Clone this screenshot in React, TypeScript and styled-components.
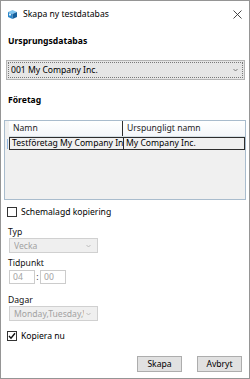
import React from "react";
import styled, { createGlobalStyle } from "styled-components";

const GlobalStyle = createGlobalStyle`
    html, body {
        margin: 0;
        padding: 0;
        background: #ffffff;
    }
    body {
        font-family: "Noto Sans", "Segoe UI", sans-serif;
        font-size: 8.6px;
        color: #000000;
    }
`;

const Window = styled.div`
    width: 250px;
    height: 379px;
    box-sizing: border-box;
    border: 1px solid #959595;
    background: #ffffff;
    display: flex;
    flex-direction: column;
    overflow: hidden;
`;

const TitleBar = styled.div`
    height: 26px;
    display: flex;
    align-items: center;
    padding: 0 7px 0 6px;
    gap: 5px;
`;

const Title = styled.span`
    flex: 1;
    font-size: 8.6px;
    color: #000;
`;

const Body = styled.div`
    display: flex;
    flex-direction: column;
    padding: 0 3px;
`;

interface SpaceProps {
    top?: number;
}

const SectionLabel = styled.div<SpaceProps>`
    font-weight: bold;
    height: 12px;
    line-height: 12px;
    margin: ${p => p.top || 0}px 0 0 4px;
`;

const FieldLabel = styled.div<SpaceProps>`
    height: 12px;
    line-height: 12px;
    margin: ${p => p.top || 0}px 0 0 4px;
    color: #111;
`;

const MainCombo = styled.div`
    margin: 13px 1px 0 2px;
    height: 20px;
    box-sizing: border-box;
    border: 1px solid #b4b4b4;
    background: #e6e6e6;
    padding: 1px;
    display: flex;
`;

const FocusBox = styled.div`
    flex: 1;
    border: 1px dotted #7a7a7a;
    display: flex;
    align-items: center;
    justify-content: space-between;
    padding: 0 4px 0 2px;
`;

const ComboText = styled.span`
    flex: 1;
    white-space: nowrap;
    overflow: hidden;
`;

const Grid = styled.div`
    margin: 14px 0 0 0;
    height: 80px;
    box-sizing: border-box;
    border: 1px solid #a9bccd;
    background: #f0f0f0;
    display: flex;
    flex-direction: column;
    padding-left: 4px;
`;

const GridRow = styled.div<{ $header?: boolean }>`
    display: grid;
    grid-template-columns: 113px 1fr;
    height: ${p => (p.$header ? 16 : 13)}px;
    box-sizing: border-box;
    background: ${p => (p.$header ? "linear-gradient(#ffffff, #f4f7fa)" : "#f0f0f0")};
    border: ${p => (p.$header ? "none" : "1px solid #2e2e2e")};
    border-bottom: 1px solid ${p => (p.$header ? "#d5dfe5" : "#2e2e2e")};
    position: relative;
`;

const Cell = styled.div<{ $header?: boolean }>`
    padding-left: ${p => (p.$header ? 4 : 2)}px;
    line-height: ${p => (p.$header ? 15 : 11)}px;
    white-space: nowrap;
    overflow: hidden;
    color: ${p => (p.$header ? "#1e1e1e" : "#000")};
    & + & {
        border-left: 1px solid ${p => (p.$header ? "#d5dfe5" : "#2e2e2e")};
    }
`;

const RowMarker = styled.span`
    position: absolute;
    left: -3px;
    top: 1px;
    width: 1px;
    height: 10px;
    background: #8fb5e0;
`;

const CheckRow = styled.label<SpaceProps>`
    display: flex;
    align-items: center;
    gap: 4px;
    height: 14px;
    margin: ${p => p.top || 0}px 0 0 3px;
`;

const Box = styled.span`
    width: 8px;
    height: 8px;
    border: 1px solid #333;
    background: #fff;
    display: flex;
    align-items: center;
    justify-content: center;
`;

const SmallCombo = styled.div<SpaceProps>`
    width: 89px;
    height: 15px;
    box-sizing: border-box;
    margin: ${p => p.top || 0}px 0 0 5px;
    border: 1px solid #d0d0d0;
    background: #efefef;
    color: #a2a2a2;
    display: flex;
    align-items: center;
    gap: 2px;
    padding: 0 6px 0 4px;
`;

const TimeRow = styled.div`
    display: flex;
    align-items: center;
    margin: 1px 0 0 5px;
`;

const TimeInput = styled.div`
    width: 26px;
    height: 14px;
    box-sizing: border-box;
    border: 1px solid #cccccc;
    color: #a2a2a2;
    line-height: 12px;
    padding-left: 3px;
    background: #fff;
`;

const Colon = styled.span`
    color: #333;
    width: 5px;
    text-align: center;
`;

const Footer = styled.div`
    display: flex;
    justify-content: flex-end;
    gap: 15px;
    margin: 13px 4px 0 0;
`;

const Button = styled.button`
    width: 45px;
    height: 16px;
    box-sizing: border-box;
    border: 1px solid #adadad;
    background: #e1e1e1;
    font-family: inherit;
    font-size: 8.6px;
    padding: 0;
    line-height: 13px;
    color: #000;
`;

const Chevron = ({ color }: { color: string }) => (
    <svg width="5" height="4" viewBox="0 0 5 4">
        <path d="M0.5 1 L2.5 3 L4.5 1" stroke={color} strokeWidth="0.9" fill="none" />
    </svg>
);

const AppIcon = () => (
    <svg width="11" height="11" viewBox="0 0 11 11">
        <polygon points="1,3 5.5,1 10,3 5.5,5" fill="#7ec4ee" />
        <polygon points="1,3 5.5,5 5.5,10 1,8" fill="#2a86c9" />
        <polygon points="5.5,5 10,3 10,8 5.5,10" fill="#155f9c" />
        <rect x="2" y="4.5" width="2" height="2" fill="#dff1fb" />
    </svg>
);

const CloseIcon = () => (
    <svg width="9" height="9" viewBox="0 0 9 9">
        <path d="M0.5 0.5 L8.5 8.5 M8.5 0.5 L0.5 8.5" stroke="#333" strokeWidth="0.9" />
    </svg>
);

const Check = () => (
    <svg width="8" height="8" viewBox="0 0 8 8">
        <path d="M1 4 L3 6.2 L7 1.2" stroke="#111" strokeWidth="1.4" fill="none" />
    </svg>
);

const App = () => {
    return (
        <>
            <GlobalStyle />
            <Window>
                <TitleBar>
                    <AppIcon />
                    <Title>Skapa ny testdatabas</Title>
                    <CloseIcon />
                </TitleBar>
                <Body>
                    <SectionLabel top={8}>Ursprungsdatabas</SectionLabel>
                    <MainCombo>
                        <FocusBox>
                            <ComboText>001 My Company Inc.</ComboText>
                            <Chevron color="#707070" />
                        </FocusBox>
                    </MainCombo>
                    <SectionLabel top={14}>Företag</SectionLabel>
                    <Grid>
                        <GridRow $header>
                            <Cell $header>Namn</Cell>
                            <Cell $header>Urspungligt namn</Cell>
                        </GridRow>
                        <GridRow>
                            <RowMarker />
                            <Cell>Testföretag My Company Inc.</Cell>
                            <Cell>My Company Inc.</Cell>
                        </GridRow>
                    </Grid>
                    <CheckRow top={5}>
                        <Box />
                        Schemalagd kopiering
                    </CheckRow>
                    <FieldLabel top={7}>Typ</FieldLabel>
                    <SmallCombo>
                        <ComboText>Vecka</ComboText>
                        <Chevron color="#b8b8b8" />
                    </SmallCombo>
                    <FieldLabel top={4}>Tidpunkt</FieldLabel>
                    <TimeRow>
                        <TimeInput>04</TimeInput>
                        <Colon>:</Colon>
                        <TimeInput>00</TimeInput>
                    </TimeRow>
                    <FieldLabel top={10}>Dagar</FieldLabel>
                    <SmallCombo>
                        <ComboText>Monday,Tuesday,Wednesday</ComboText>
                        <Chevron color="#b8b8b8" />
                    </SmallCombo>
                    <CheckRow top={8}>
                        <Box>
                            <Check />
                        </Box>
                        Kopiera nu
                    </CheckRow>
                    <Footer>
                        <Button>Skapa</Button>
                        <Button>Avbryt</Button>
                    </Footer>
                </Body>
            </Window>
        </>
    );
};

export default App;
